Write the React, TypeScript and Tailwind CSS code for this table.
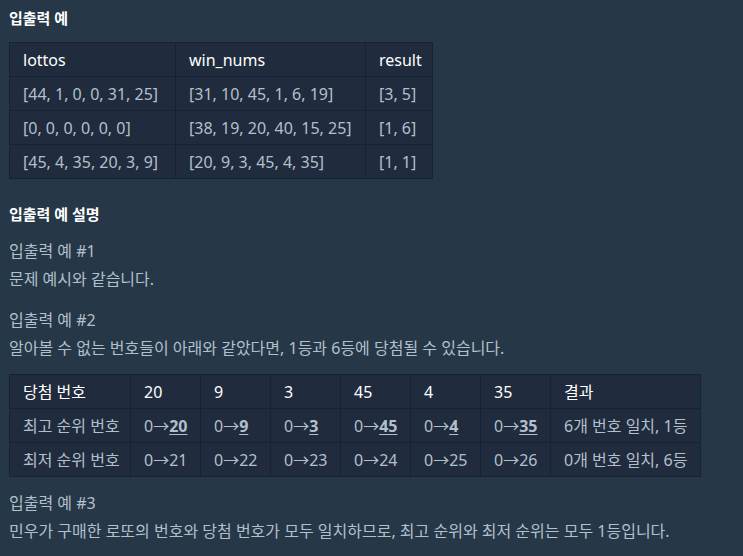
const font = { fontFamily: '"Noto Sans", "Noto Sans CJK KR", sans-serif' };

const examples = [
  ["[44, 1, 0, 0, 31, 25]", "[31, 10, 45, 1, 6, 19]", "[3, 5]"],
  ["[0, 0, 0, 0, 0, 0]", "[38, 19, 20, 40, 15, 25]", "[1, 6]"],
  ["[45, 4, 35, 20, 3, 9]", "[20, 9, 3, 45, 4, 35]", "[1, 1]"],
];

const winNums = ["20", "9", "3", "45", "4", "35"];
const worst = ["21", "22", "23", "24", "25", "26"];

const th = "h-[34px] border border-[#172334] px-[13px] text-left font-normal text-white whitespace-nowrap";
const td = "h-[34px] border border-[#172334] px-[13px] text-[#b2c0cc] whitespace-nowrap";

export default function App() {
  return (
    <div className="min-h-screen bg-[#263747] pl-[9px] pt-[6px] text-[16px]" style={font}>
      <h5 className="text-[15px] font-bold leading-[24px] text-white">입출력 예</h5>

      <table className="mt-[12px] w-[423px] table-fixed border-collapse bg-[#202b3d]">
        <thead>
          <tr>
            <th className={`${th} w-[166px]`}>lottos</th>
            <th className={`${th} w-[190px]`}>win_nums</th>
            <th className={`${th} w-[67px]`}>result</th>
          </tr>
        </thead>
        <tbody>
          {examples.map((row, i) => (
            <tr key={i}>
              {row.map((c, j) => (
                <td key={j} className={td}>
                  {c}
                </td>
              ))}
            </tr>
          ))}
        </tbody>
      </table>

      <h5 className="mt-[23px] text-[15px] font-bold leading-[24px] text-white">입출력 예 설명</h5>

      <div className="mt-[11px] leading-[28px] text-[#b2c0cc]">
        <p>입출력 예 #1</p>
        <p>문제 예시와 같습니다.</p>
      </div>

      <div className="mt-[13px] leading-[28px] text-[#b2c0cc]">
        <p>입출력 예 #2</p>
        <p>알아볼 수 없는 번호들이 아래와 같았다면, 1등과 6등에 당첨될 수 있습니다.</p>
      </div>

      <table className="mt-[12px] w-[691px] table-fixed border-collapse bg-[#202b3d]">
        <thead>
          <tr>
            <th className={`${th} w-[121px] font-bold`}>당첨 번호</th>
            {winNums.map((n) => (
              <th key={n} className={`${th} w-[70px]`}>
                {n}
              </th>
            ))}
            <th className={`${th} w-[150px] font-bold`}>결과</th>
          </tr>
        </thead>
        <tbody>
          <tr>
            <td className={td}>최고 순위 번호</td>
            {winNums.map((n) => (
              <td key={n} className={td}>
                0→<span className="font-bold underline underline-offset-2">{n}</span>
              </td>
            ))}
            <td className={td}>6개 번호 일치, 1등</td>
          </tr>
          <tr>
            <td className={td}>최저 순위 번호</td>
            {worst.map((n) => (
              <td key={n} className={td}>
                0→{n}
              </td>
            ))}
            <td className={td}>0개 번호 일치, 6등</td>
          </tr>
        </tbody>
      </table>

      <div className="mt-[12px] pb-4 leading-[28px] text-[#b2c0cc]">
        <p>입출력 예 #3</p>
        <p>민우가 구매한 로또의 번호와 당첨 번호가 모두 일치하므로, 최고 순위와 최저 순위는 모두 1등입니다.</p>
      </div>
    </div>
  );
}
